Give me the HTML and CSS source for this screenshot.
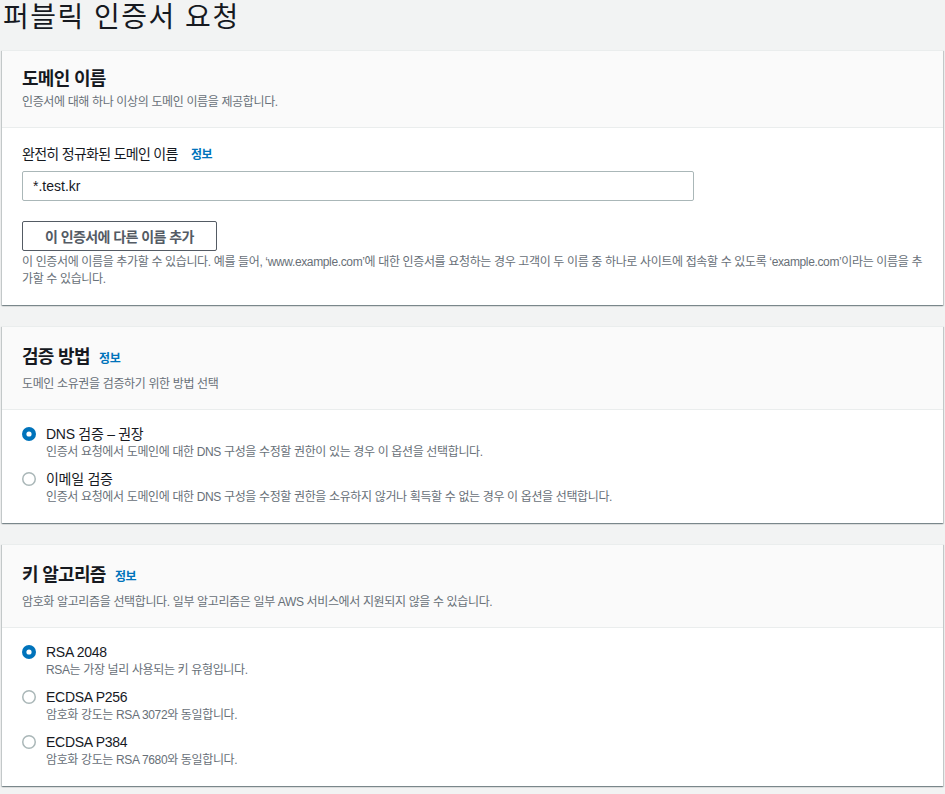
FILE: index.html
```html
<!DOCTYPE html>
<html lang="ko">
<head>
<meta charset="utf-8">
<title>퍼블릭 인증서 요청</title>
<link rel="stylesheet" href="styles.css">
</head>
<body>
<h1 class="page-title">퍼블릭 인증서 요청</h1>

<section class="card">
  <header class="card-header">
    <h2 class="card-title">도메인 이름</h2>
    <p class="card-desc">인증서에 대해 하나 이상의 도메인 이름을 제공합니다.</p>
  </header>
  <div class="card-body body-domain">
    <label class="field-label" for="fqdn">완전히 정규화된 도메인 이름 <a class="info" href="#">정보</a></label>
    <input id="fqdn" class="text-input" type="text" value="*.test.kr">
    <button class="btn" type="button">이 인증서에 다른 이름 추가</button>
    <p class="help">이 인증서에 이름을 추가할 수 있습니다. 예를 들어, ‘www.example.com’에 대한 인증서를 요청하는 경우 고객이 두 이름 중 하나로 사이트에 접속할 수 있도록 ‘example.com’이라는 이름을 추가할 수 있습니다.</p>
  </div>
</section>

<section class="card">
  <header class="card-header">
    <h2 class="card-title with-info">검증 방법 <a class="info" href="#">정보</a></h2>
    <p class="card-desc">도메인 소유권을 검증하기 위한 방법 선택</p>
  </header>
  <div class="card-body radios">
    <div class="radio">
      <svg class="radio-icon" viewBox="0 0 14 14" width="14" height="14"><circle cx="7" cy="7" r="7" fill="#0073bb"/><circle cx="7" cy="7" r="2.6" fill="#ffffff"/></svg>
      <div class="radio-text">
        <div class="radio-label">DNS 검증 – 권장</div>
        <div class="radio-desc">인증서 요청에서 도메인에 대한 DNS 구성을 수정할 권한이 있는 경우 이 옵션을 선택합니다.</div>
      </div>
    </div>
    <div class="radio">
      <svg class="radio-icon" viewBox="0 0 14 14" width="14" height="14"><circle cx="7" cy="7" r="6.25" fill="#ffffff" stroke="#aab7b8" stroke-width="1.5"/></svg>
      <div class="radio-text">
        <div class="radio-label">이메일 검증</div>
        <div class="radio-desc">인증서 요청에서 도메인에 대한 DNS 구성을 수정할 권한을 소유하지 않거나 획득할 수 없는 경우 이 옵션을 선택합니다.</div>
      </div>
    </div>
  </div>
</section>

<section class="card">
  <header class="card-header">
    <h2 class="card-title with-info">키 알고리즘 <a class="info" href="#">정보</a></h2>
    <p class="card-desc">암호화 알고리즘을 선택합니다. 일부 알고리즘은 일부 AWS 서비스에서 지원되지 않을 수 있습니다.</p>
  </header>
  <div class="card-body radios">
    <div class="radio">
      <svg class="radio-icon" viewBox="0 0 14 14" width="14" height="14"><circle cx="7" cy="7" r="7" fill="#0073bb"/><circle cx="7" cy="7" r="2.6" fill="#ffffff"/></svg>
      <div class="radio-text">
        <div class="radio-label">RSA 2048</div>
        <div class="radio-desc">RSA는 가장 널리 사용되는 키 유형입니다.</div>
      </div>
    </div>
    <div class="radio">
      <svg class="radio-icon" viewBox="0 0 14 14" width="14" height="14"><circle cx="7" cy="7" r="6.25" fill="#ffffff" stroke="#aab7b8" stroke-width="1.5"/></svg>
      <div class="radio-text">
        <div class="radio-label">ECDSA P256</div>
        <div class="radio-desc">암호화 강도는 RSA 3072와 동일합니다.</div>
      </div>
    </div>
    <div class="radio">
      <svg class="radio-icon" viewBox="0 0 14 14" width="14" height="14"><circle cx="7" cy="7" r="6.25" fill="#ffffff" stroke="#aab7b8" stroke-width="1.5"/></svg>
      <div class="radio-text">
        <div class="radio-label">ECDSA P384</div>
        <div class="radio-desc">암호화 강도는 RSA 7680와 동일합니다.</div>
      </div>
    </div>
  </div>
</section>
</body>
</html>
```

FILE: styles.css
```css
* { box-sizing: border-box; }

html, body {
  background: #f2f3f3;
}

body {
  margin: 0;
  padding: 0 2px;
  font-family: "Liberation Sans", "Noto Sans CJK KR", sans-serif;
  color: #16191f;
  font-size: 14px;
  letter-spacing: -0.05em;
}

.page-title {
  margin: 0 0 14px;
  padding-left: 1px;
  font-size: 28px;
  line-height: 36px;
  font-weight: 400;
  letter-spacing: 1.5px;
  color: #16191f;
}

.card {
  background: #ffffff;
  margin-bottom: 21px;
  border-top: 1px solid #eaeded;
  box-shadow: 0 1px 1px 0 rgba(0, 28, 36, 0.3), 1px 1px 1px 0 rgba(0, 28, 36, 0.15), -1px 1px 1px 0 rgba(0, 28, 36, 0.15);
}

.card-header {
  background: #fafafa;
  border-bottom: 1px solid #eaeded;
  padding: 17px 20px 17px;
}

.card-title {
  margin: 0;
  font-size: 18px;
  line-height: 22px;
  font-weight: 700;
}

.card-title.with-info {
  line-height: 26px;
}

.card-title .info {
  margin-left: 5px;
}

.card-desc {
  margin: 4px 0 0;
  font-size: 12px;
  line-height: 16px;
  letter-spacing: -0.03em;
  color: #687078;
}

.info {
  font-size: 12px;
  font-weight: 700;
  letter-spacing: -0.03em;
  color: #0073bb;
  text-decoration: none;
  margin-left: 10px;
}

.card-body {
  padding: 16px 18px 17px 20px;
}

.body-domain {
  display: flex;
  flex-direction: column;
  align-items: flex-start;
}

.field-label {
  font-size: 14px;
  line-height: 20px;
  color: #16191f;
}

.text-input {
  margin-top: 6px;
  width: 672px;
  height: 30px;
  border: 1px solid #aab7b8;
  border-radius: 2px;
  padding: 0 10px;
  font-family: inherit;
  font-size: 14px;
  letter-spacing: 0;
  color: #16191f;
  background: #ffffff;
}

.btn {
  margin-top: 20px;
  height: 30px;
  padding: 0 22px;
  background: #ffffff;
  border: 1px solid #545b64;
  border-radius: 2px;
  font-family: inherit;
  font-size: 14px;
  font-weight: 700;
  letter-spacing: -0.04em;
  color: #545b64;
}

.help {
  margin: 3px 0 0;
  font-size: 12px;
  line-height: 17px;
  letter-spacing: -0.03em;
  color: #687078;
}

.radios {
  display: flex;
  flex-direction: column;
  gap: 9px;
  padding: 14px 20px 18px;
}

.radio {
  display: flex;
  align-items: flex-start;
  gap: 10px;
}

.radio-icon {
  flex: none;
  margin-top: 3px;
}

.radio-label {
  font-size: 14px;
  line-height: 20px;
  letter-spacing: -0.02em;
}

.radio-desc {
  font-size: 12px;
  line-height: 16px;
  letter-spacing: -0.03em;
  color: #687078;
}
```
